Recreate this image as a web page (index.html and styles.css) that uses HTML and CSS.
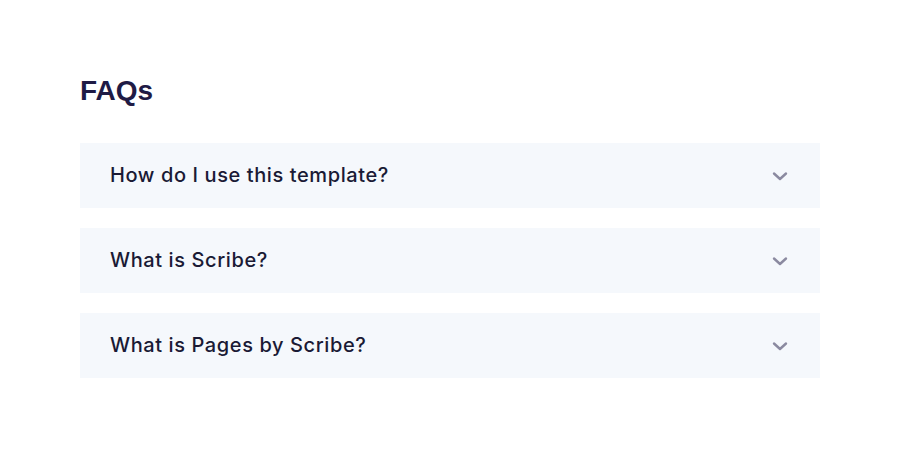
FILE: index.html
```html
<!DOCTYPE html>
<html>
<head>
<meta charset="utf-8">
<link rel="stylesheet" href="styles.css">
</head>
<body>
<section class="faq">
  <h2 class="faq-title">FAQs</h2>
  <div class="faq-list">
    <div class="faq-item">
      <span class="faq-q">How do I use this template?</span>
      <svg class="chev" width="18" height="12" viewBox="0 0 18 12"><path d="M3 3.5 L9 9 L15 3.5" fill="none" stroke="#8b8aa0" stroke-width="2.4" stroke-linecap="round" stroke-linejoin="round"/></svg>
    </div>
    <div class="faq-item">
      <span class="faq-q">What is Scribe?</span>
      <svg class="chev" width="18" height="12" viewBox="0 0 18 12"><path d="M3 3.5 L9 9 L15 3.5" fill="none" stroke="#8b8aa0" stroke-width="2.4" stroke-linecap="round" stroke-linejoin="round"/></svg>
    </div>
    <div class="faq-item">
      <span class="faq-q">What is Pages by Scribe?</span>
      <svg class="chev" width="18" height="12" viewBox="0 0 18 12"><path d="M3 3.5 L9 9 L15 3.5" fill="none" stroke="#8b8aa0" stroke-width="2.4" stroke-linecap="round" stroke-linejoin="round"/></svg>
    </div>
  </div>
</section>
</body>
</html>
```
FILE: styles.css
```css
html, body {
  margin: 0;
  padding: 0;
  background: #ffffff;
}
.faq {
  width: 740px;
  margin: 0 80px;
  padding-top: 74px;
}
.faq-title {
  margin: 0 0 35px 0;
  font-family: "Liberation Sans", Arial, sans-serif;
  font-weight: 700;
  font-size: 28px;
  line-height: 34px;
  color: #1f1b45;
}
.faq-list {
  display: flex;
  flex-direction: column;
  gap: 20px;
}
.faq-item {
  height: 65px;
  background: #f5f8fc;
  display: flex;
  align-items: center;
  justify-content: space-between;
  padding: 0 31px 0 30px;
  box-sizing: border-box;
}
.faq-q {
  font-family: Inter, "Liberation Sans", sans-serif;
  font-weight: 500;
  font-size: 20px;
  letter-spacing: 0.6px;
  color: #1a1a35;
  position: relative;
  top: -1px;
}
.chev {
  display: block;
}
```
